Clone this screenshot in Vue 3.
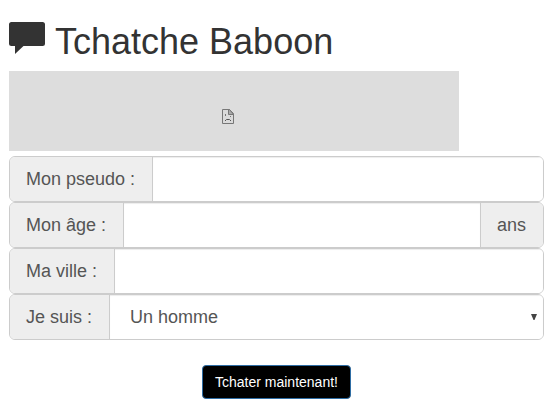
<script setup>
import { ref } from 'vue'

const pseudo = ref('')
const age = ref('')
const city = ref('')
const gender = ref('homme')
</script>

<template>
  <main class="page">
    <h1 class="title">
      <svg class="bubble" viewBox="0 0 36 32" aria-hidden="true">
        <path d="M2.5 0H33.5Q36 0 36 2.5V21.500Q36 24 33.500 24H14.500L6 32V24H2.500Q0 24 0 21.500V2.500Q0 0 2.500 0Z" fill="#333" />
      </svg>
      <span>Tchatche Baboon</span>
    </h1>

    <div class="banner">
      <svg class="broken" viewBox="0 0 12 15" fill="none" stroke="#777" aria-hidden="true">
        <path d="M0.5 0.5H7.5L11.5 4.5V14.5H0.5Z" fill="#dadada" />
        <path d="M6.5 0.5V5.5H11.5L7.5 0.5Z" fill="#aaa" />
        <path d="M3.5 5V7M8.500 7V8" />
        <path d="M3 12L4.5 10.5H7.5L9 12" stroke="#555" />
      </svg>
    </div>

    <form @submit.prevent>
      <div class="group">
        <label class="addon" for="pseudo">Mon pseudo :</label>
        <input id="pseudo" v-model="pseudo" class="control" type="text" />
      </div>
      <div class="group">
        <label class="addon" for="age">Mon âge :</label>
        <input id="age" v-model="age" class="control" type="text" />
        <span class="addon">ans</span>
      </div>
      <div class="group">
        <label class="addon" for="city">Ma ville :</label>
        <input id="city" v-model="city" class="control" type="text" />
      </div>
      <div class="group">
        <label class="addon" for="gender">Je suis :</label>
        <div class="select-wrap">
          <select id="gender" v-model="gender" class="control">
            <option value="homme">Un homme</option>
            <option value="femme">Une femme</option>
          </select>
          <svg class="arrow" viewBox="0 0 6 6" aria-hidden="true">
            <path d="M0 0H6L3.500 6H2.500Z" fill="#444" />
          </svg>
        </div>
      </div>
      <div class="actions">
        <button class="submit" type="submit">Tchater maintenant!</button>
      </div>
    </form>
  </main>
</template>

<style>
body {
  margin: 0;
  background: #fff;
}
</style>

<style scoped>
.page,
.page * {
  box-sizing: border-box;
}
.page {
  padding: 22px 9px 0;
  font-family: "Liberation Sans", Arial, sans-serif;
  font-size: 18px;
  color: #555;
}
.title {
  display: flex;
  align-items: flex-start;
  gap: 10px;
  margin: 0 0 9px;
  font-size: 36px;
  line-height: 40px;
  font-weight: 400;
  color: #333;
}
.bubble {
  width: 36px;
  height: 32px;
}
.banner {
  display: flex;
  align-items: center;
  justify-content: center;
  max-width: 450px;
  height: 80px;
  margin-bottom: 5px;
  padding-top: 11px;
  padding-right: 12px;
  background: #ddd;
}
.broken {
  width: 12px;
  height: 15px;
}
.group {
  display: flex;
  height: 46px;
  border: 1px solid #ccc;
  border-radius: 6px;
  overflow: hidden;
}
.addon {
  flex: none;
  padding: 0 17px 0 16px;
  line-height: 44px;
  background: #eee;
}
.control {
  flex: 1;
  width: 100%;
  min-width: 0;
  height: 44px;
  margin: 0;
  padding: 0 16px;
  border: 0;
  border-left: 1px solid #ccc;
  border-radius: 0;
  outline: 0;
  background: #fff;
  box-shadow: inset 0 1px 1px rgba(0, 0, 0, 0.075);
  font: inherit;
  color: #555;
  appearance: none;
}
.control + .addon {
  border-left: 1px solid #ccc;
}
.select-wrap {
  position: relative;
  flex: 1;
}
.select-wrap .control {
  padding: 0 20px;
}
.arrow {
  position: absolute;
  top: 19px;
  right: 6px;
  width: 6px;
  height: 6px;
  pointer-events: none;
}
.actions {
  display: flex;
  justify-content: center;
  padding-top: 25px;
}
.submit {
  height: 34px;
  padding: 0 12px;
  border: 1px solid #2e6da4;
  border-radius: 4px;
  background: #000;
  font: 14px/20px "Liberation Sans", Arial, sans-serif;
  color: #fff;
}
</style>
